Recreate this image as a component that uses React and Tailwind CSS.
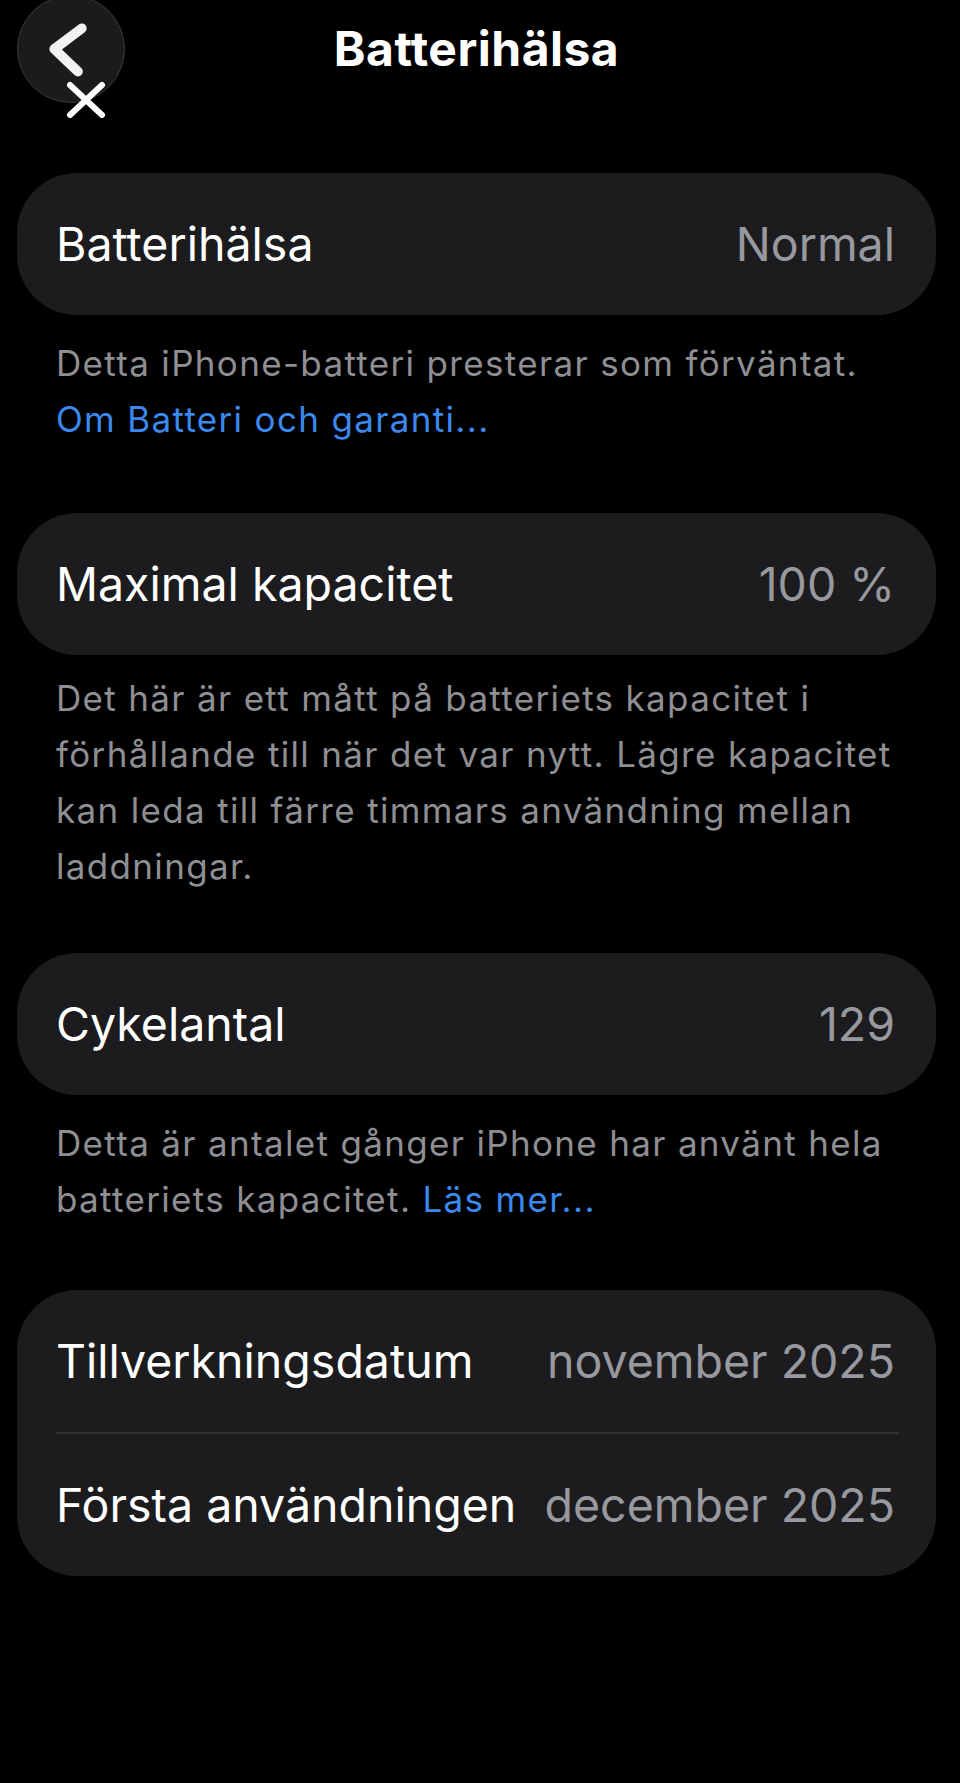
import React from 'react';

const Row = ({ label, value }) => (
  <div className="flex items-center justify-between h-[142px] pl-[39px] pr-[41px]">
    <span className="text-white">{label}</span>
    <span className="text-[#98989f]">{value}</span>
  </div>
);

const Card = ({ children }) => (
  <div className="rounded-[60px] bg-[#1c1c1e] text-[46.5px] leading-none">
    {children}
  </div>
);

const Footnote = ({ className, children }) => (
  <p className={`pl-[39px] pr-[41px] text-[35px] leading-[56px] tracking-[0.038em] text-[#8e8e93] whitespace-nowrap ${className}`}>
    {children}
  </p>
);

const Link = ({ children }) => <span className="text-[#3b88ee]">{children}</span>;

export default function App() {
  return (
    <div className="min-h-[1783px] bg-black text-white overflow-hidden [font-family:Inter,'Noto_Sans',sans-serif]">
      <div className="relative">
        <header className="grid grid-cols-[108px_1fr_108px] items-center h-[108px] pl-[17px] pr-[24px] -mt-[5px]">
          <button className="w-[108px] h-[108px] rounded-full bg-[#1b1b1c] border-[1.5px] border-[#3a3a3c] flex items-center justify-center">
            <svg width="108" height="108" viewBox="0 0 108 108" fill="none">
              <path d="M65 33 L37 54 L61 77" stroke="#f2f2f2" strokeWidth="10" strokeLinecap="round" strokeLinejoin="round" />
            </svg>
          </button>
          <h1 className="text-center text-[48px] font-bold leading-none tracking-[0.01em]">Batterihälsa</h1>
          <div />
        </header>

        {/* close mark over the back button */}
        <svg className="absolute left-[60px] top-[83px]" width="50" height="44" viewBox="0 0 50 44" fill="none">
          <path d="M10 7 L42 37 M42 7 L10 37" stroke="#ffffff" strokeWidth="6" strokeLinecap="round" />
        </svg>
      </div>

      <main className="pl-[17px] pr-[24px] mt-[70px]">
        <Card>
          <Row label="Batterihälsa" value="Normal" />
        </Card>
        <Footnote className="mt-[20px] mb-[66px]">
          Detta iPhone-batteri presterar som förväntat.
          <br />
          <Link>Om Batteri och garanti...</Link>
        </Footnote>

        <Card>
          <Row label="Maximal kapacitet" value="100 %" />
        </Card>
        <Footnote className="mt-[15px] mb-[59px]">
          Det här är ett mått på batteriets kapacitet i
          <br />
          förhållande till när det var nytt. Lägre kapacitet
          <br />
          kan leda till färre timmars användning mellan
          <br />
          laddningar.
        </Footnote>

        <Card>
          <Row label="Cykelantal" value="129" />
        </Card>
        <Footnote className="mt-[20px] mb-[63px]">
          Detta är antalet gånger iPhone har använt hela
          <br />
          batteriets kapacitet. <Link>Läs mer...</Link>
        </Footnote>

        <Card>
          <Row label="Tillverkningsdatum" value="november 2025" />
          <div className="ml-[39px] mr-[37px] h-[2px] bg-[#323235]" />
          <Row label="Första användningen" value="december 2025" />
        </Card>
      </main>
    </div>
  );
}
